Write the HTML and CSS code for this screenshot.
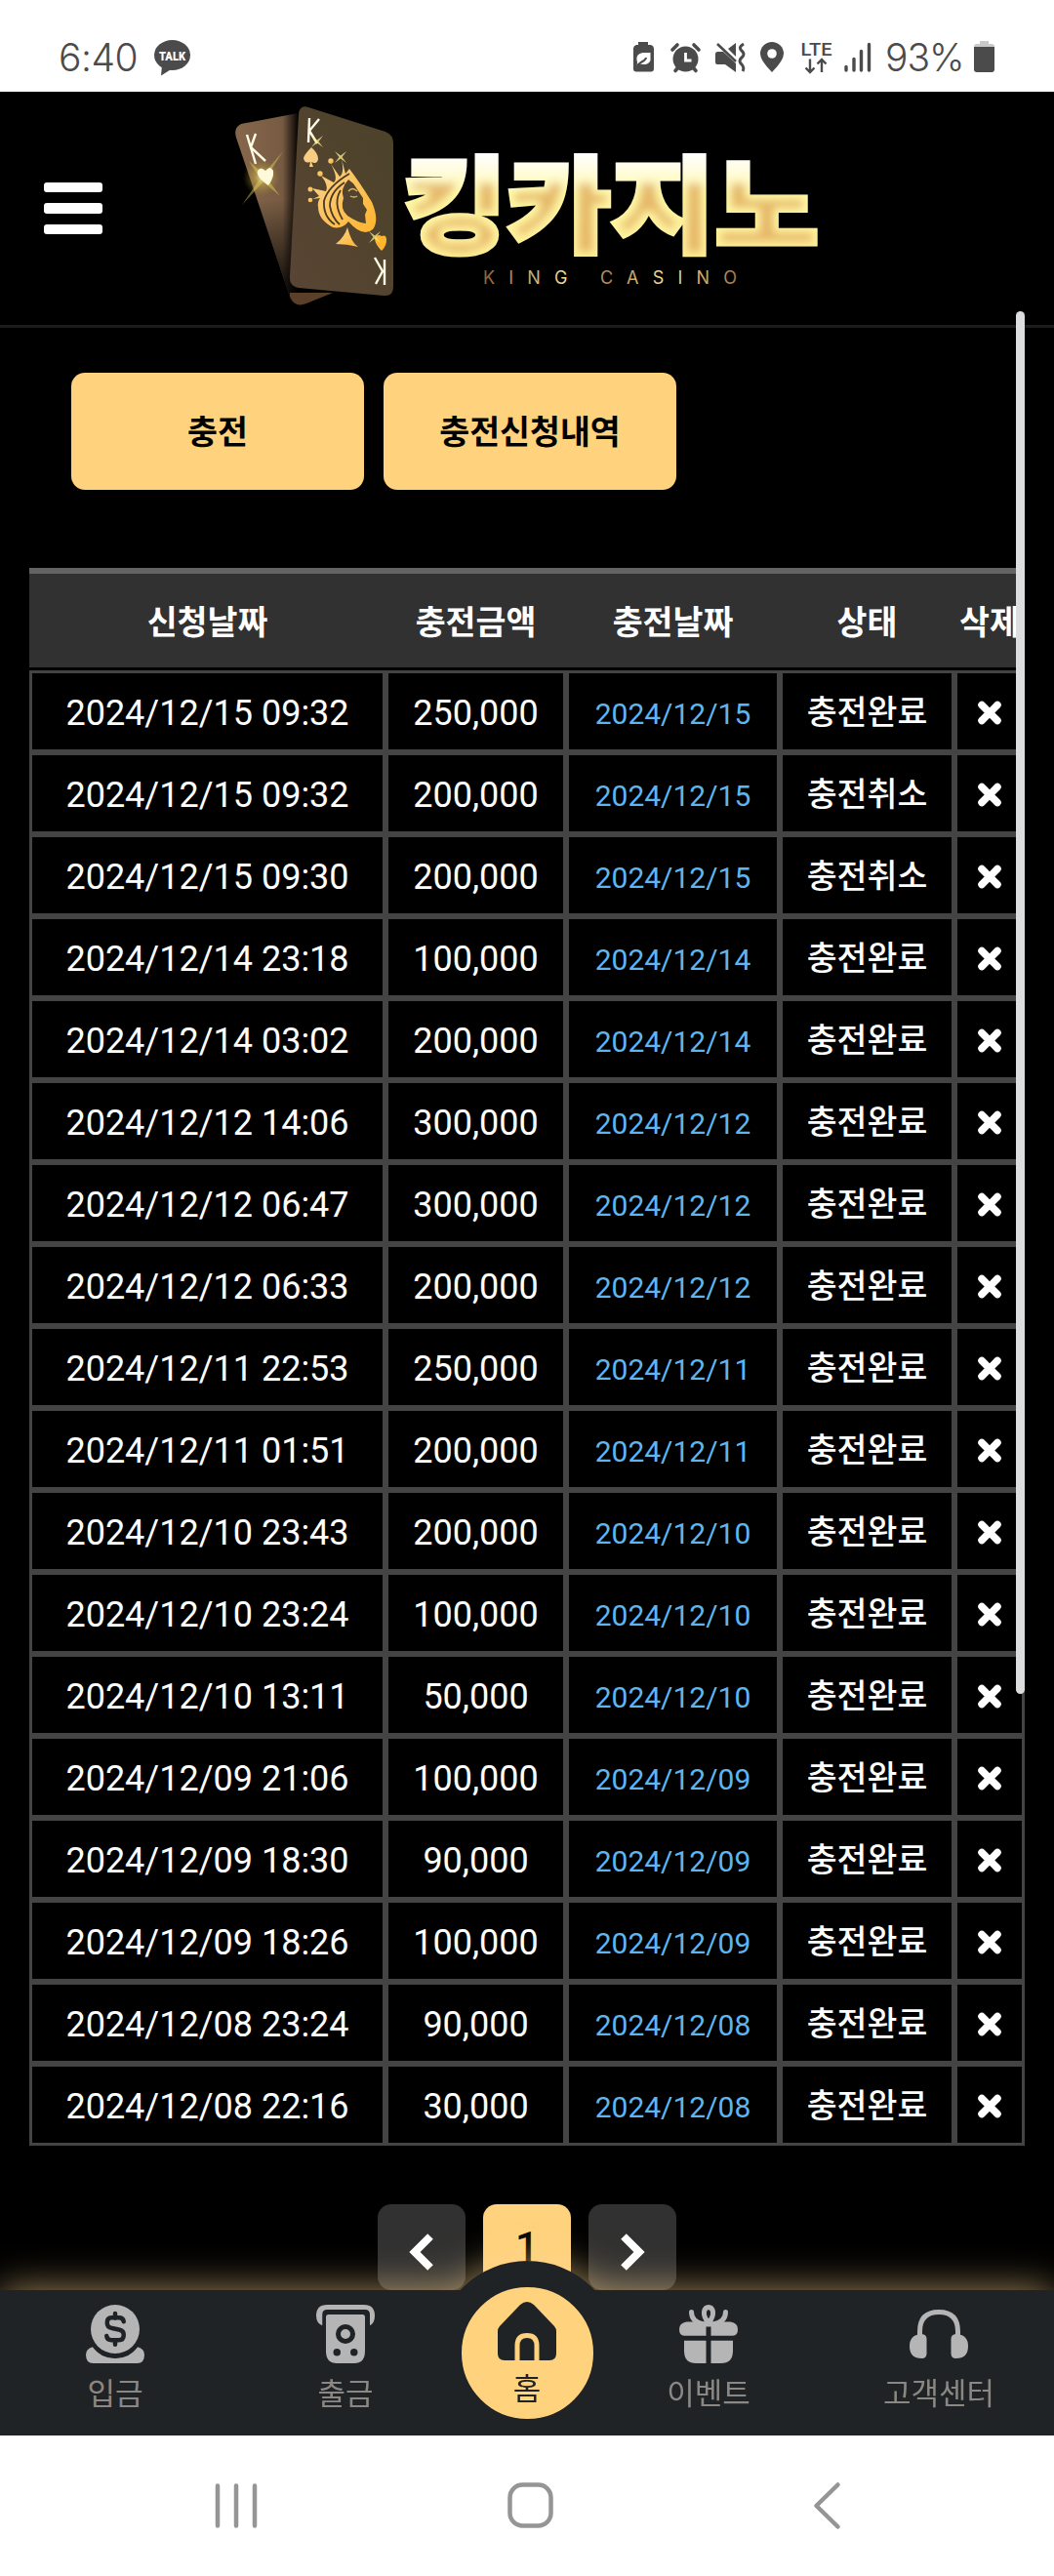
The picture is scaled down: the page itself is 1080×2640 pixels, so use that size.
FILE: index.html
```
<!DOCTYPE html>
<html lang="ko">
<head>
<meta charset="UTF-8">
<meta name="viewport" content="width=device-width, initial-scale=1.0">
<title>충전신청내역</title>
<link rel="stylesheet" href="styles.css">
</head>
<body>
<header class="status-bar">
	<div class="status-left">
		<span class="status-time">6:40</span>
		<svg class="talk" width="37" height="37" viewBox="0 0 37 37">
			<ellipse cx="18.500" cy="15.500" rx="18.500" ry="15.500" fill="#4b4b4b"/>
			<path d="M8 26 L7 36.500 L19 29 Z" fill="#4b4b4b"/>
			<text x="18.500" y="20.500" class="talk-text" textLength="27" lengthAdjust="spacingAndGlyphs">TALK</text>
		</svg>
	</div>
	<svg class="status-icons" width="250" height="36" viewBox="0 0 250 36" fill="#4b4b4b">
		<!-- 배터리 절약 -->
		<path d="M6 1 h10 v3 h3 a4 4 0 0 1 3 3.500 v21 a3 3 0 0 1 -3 3 h-15 a3 3 0 0 1 -3 -3 v-21 a4 4 0 0 1 3 -3.500 h2z"/>
		<path d="M18.500 12 v8 q-2 4 -6 4 q-4 0 -6 -1 l-2 2 q1 -4 0 -5 q-1 -7 6 -8z" fill="#fff"/>
		<path d="M5 25 Q8 22 12 20 Q14 18 14 17" fill="none" stroke="#4b4b4b" stroke-width="2"/>
		<!-- 알람 -->
		<circle cx="54.500" cy="18.500" r="13"/>
		<path d="M41 9 L46 4 M68 9 L63 4 M44 30.500 L47 27 M65 30.500 L62 27" stroke="#4b4b4b" stroke-width="3.600" stroke-linecap="round"/>
		<path d="M54.500 12 v8 h6" fill="none" stroke="#fff" stroke-width="2.800"/>
		<!-- 무음 -->
		<path d="M85 13 q0 -1.500 2 -2 h6 l13 12 v9 l-11 -8 h-8 q-2 0 -2 -2z M98 8 l8 -6 v14z"/>
		<path d="M87 3 L106 21" stroke="#4b4b4b" stroke-width="2.600"/>
		<path d="M114 3 q-6 3.500 -2 7 q4 3.500 0 7 q-4 3.500 0 7 q3 3 1 7" fill="none" stroke="#4b4b4b" stroke-width="3"/>
		<!-- 위치 -->
		<path d="M143 1 a12 12 0 0 1 12 12 q0 7 -12 19 q-12 -12 -12 -19 a12 12 0 0 1 12 -12z"/>
		<circle cx="143" cy="13" r="4.800" fill="#fff"/>
		<text x="172.500" y="14.500" class="lte" textLength="32" lengthAdjust="spacingAndGlyphs">LTE</text>
		<path d="M182 18.500 v13 M177.500 27.500 l4.500 4.500 l4.500 -4.500 M194 32 v-13 M189.500 23.500 l4.500 -4.500 l4.500 4.500" fill="none" stroke="#4b4b4b" stroke-width="2.400"/>
		<!-- 신호 -->
		<path d="M219 26.500 v3.500 M227 18.500 v11.500 M234.500 10.500 v19.500 M242.500 3.500 v26.500" stroke="#4b4b4b" stroke-width="3.400" stroke-linecap="round"/>
	</svg>
	<span class="status-percent">93%</span>
	<svg class="battery" width="21" height="32" viewBox="0 0 21 32">
		<path d="M6 0 h9 v3 h3 q3 0 3 3 v1 h-21 v-1 q0 -3 3 -3 h3z" fill="#c9c9c9"/>
		<path d="M0 6 h21 v23 q0 3 -3 3 h-15 q-3 0 -3 -3z" fill="#4b4b4b"/>
	</svg>
</header>

<div class="top-bar">
	<button class="menu-btn" type="button" aria-label="메뉴"><span></span><span></span><span></span></button>
	<svg class="logo" width="610" height="220" viewBox="230 100 610 220">
		<defs>
			<linearGradient id="cardBack" x1="0" x2="1">
				<stop offset="0" stop-color="#86674c"/>
				<stop offset=".5" stop-color="#765b42"/>
				<stop offset=".66" stop-color="#080503"/>
			</linearGradient>
			<linearGradient id="cardShade" x1="0" y1="0" x2="0" y2="1">
				<stop offset=".45" stop-color="#000" stop-opacity="0"/>
				<stop offset=".9" stop-color="#000" stop-opacity=".8"/>
			</linearGradient>
			<linearGradient id="cardFront" x1="0" y1="1" x2="1" y2="0">
				<stop offset="0" stop-color="#594534"/>
				<stop offset="1" stop-color="#4b4229"/>
			</linearGradient>
			<linearGradient id="gold" x1="0" y1="0" x2="1" y2="1">
				<stop offset="0" stop-color="#f9d391"/>
				<stop offset="1" stop-color="#ffb42b"/>
			</linearGradient>
			<linearGradient id="title" gradientUnits="userSpaceOnUse" x1="0" y1="158" x2="0" y2="264">
				<stop offset="0" stop-color="#fff"/>
				<stop offset=".15" stop-color="#fffce0"/>
				<stop offset=".4" stop-color="#fff9a6"/>
				<stop offset="1" stop-color="#ffee98"/>
			</linearGradient>
			<!-- 글자 안쪽의 어두운 금색 음영 -->
			<filter id="bevel" filterUnits="userSpaceOnUse" x="400" y="140" width="450" height="140">
				<feMorphology in="SourceAlpha" operator="erode" radius="5" result="core"/>
				<feFlood x="400" y="188" width="450" height="80" flood-color="#dc9c4a" flood-opacity=".75" result="tone"/>
				<feComposite in="tone" in2="core" operator="in"/>
				<feGaussianBlur stdDeviation="4" result="soft"/>
				<feComposite in="soft" in2="SourceAlpha" operator="in" result="inner"/>
				<feMerge><feMergeNode in="SourceGraphic"/><feMergeNode in="inner"/></feMerge>
			</filter>
			<linearGradient id="sub" x1="0" x2="1">
				<stop offset="0" stop-color="#8a6236"/>
				<stop offset=".33" stop-color="#f3df9a"/>
				<stop offset=".5" stop-color="#b08250"/>
				<stop offset=".72" stop-color="#f6e49a"/>
				<stop offset="1" stop-color="#a9783f"/>
			</linearGradient>
			<radialGradient id="flare">
				<stop offset="0" stop-color="#fffbd0"/>
				<stop offset=".35" stop-color="#d6bd45" stop-opacity=".6"/>
				<stop offset="1" stop-color="#b09a30" stop-opacity="0"/>
			</radialGradient>
			<path id="star" d="M-6 -6 L0 -1.500 L6 -6 L1.500 0 L6 6 L0 1.500 L-6 6 L-1.500 0Z"/>
		</defs>
		<path d="M247 127 L305 116 L338 299 L314 311 Q302 316 297 304 L242 141 Q239 131 247 127Z" fill="url(#cardBack)"/>
		<path d="M247 127 L305 116 L338 299 L314 311 Q302 316 297 304 L242 141 Q239 131 247 127Z" fill="url(#cardShade)"/>
		<path d="M297 300 L341 300 L314 311 Q302 316 297 304Z" fill="#5a4029"/>
		<path d="M316 110 L395 135 Q403 138 403 147 V294 Q403 304 393 303 L306 295 Q296 293 297 283 L306 117 Q307 107 316 110Z" fill="url(#cardFront)"/>
		<g fill="none" stroke="#fffbe5" stroke-width="2.400">
			<path d="M253 138 L262 168 M262 137 L257 151 L272 165"/>
			<path d="M317 121 L316 146 M327 122 L317 134 L325 147"/>
			<path d="M394 266 V292 M384 264 L392 278 L385 291"/>
		</g>
		<circle cx="268" cy="182" r="19" fill="url(#flare)" opacity=".8"/>
		<path d="M248 210 L267 182 L290 155 L271 185Z M255 165 L271 179 L287 201 L267 184Z" fill="#e9d45c" opacity=".45"/>
		<path d="M275 190 Q262 181 264 175 Q267 170 272 175 Q277 169 280 175 Q281 182 275 190Z" fill="#fff9dc"/>
		<path d="M319 151 Q326 157 326 163 Q325 169 319 166 L321 171 H317 L318 166 Q312 168 311 162 Q312 158 319 151Z" fill="#f7cd83"/>
		<path d="M391 257 Q384 250 384 244 Q387 239 391 242 V238 V242 Q396 240 396 246 Q396 252 391 257Z" fill="#ffb62d"/>
		<g fill="url(#gold)">
			<path fill-rule="evenodd" d="M358 173 Q368 186 381 207 Q389 226 382 235 Q372 244 357 227 Q351 235 341 233 Q326 225 326 212 Q325 207 328 203 L320 204 L327 201 L320 193 L334 196 Q337 190 329 180 L342 187 Q347 183 339 168 L348 181 Q353 178 350 163 L354 178 Z M357 184 Q348 194 352 203 Q348 214 356 221 Q366 228 375 229 L374 220 L376 215 L372 209 L372 203 L362 188Z"/>
			<path d="M356 233 Q360 249 367 253 Q355 250 344 250 Q353 243 356 233Z"/>
			<circle cx="318" cy="205" r="2.300"/><circle cx="318" cy="194" r="2.500"/><circle cx="328" cy="178" r="2.700"/><circle cx="339" cy="165" r="2.700"/>
		</g>
		<path d="M358 178 Q336 191 332 206 Q331 222 343 230 M353 187 Q338 197 338 211 Q340 223 348 230 M349 195 Q341 208 351 225" fill="none" stroke="#4b3926" stroke-width="1.800"/>
		<path d="M357 196 q4 -5 9 0 M359 201 q4 2 7 0" fill="none" stroke="#f0b65a" stroke-width="1.300"/>
		<g fill="#f5e98a" opacity=".8">
			<use href="#star" x="325" y="145"/><use href="#star" x="349" y="161"/><use href="#star" x="384" y="243"/>
		</g>
		<text class="logo-title" x="413" y="250" textLength="426" lengthAdjust="spacingAndGlyphs">킹카지노</text>
		<text class="logo-sub" x="495" y="290.500" textLength="260">KING CASINO</text>
	</svg>
</div>

<main class="content">
	<div class="tabs">
		<a class="tab">충전</a>
		<a class="tab">충전신청내역</a>
	</div>

	<table class="history">
		<colgroup><col class="c-date"><col class="c-amount"><col class="c-done"><col class="c-state"><col class="c-del"></colgroup>
		<thead>
			<tr><th>신청날짜</th><th>충전금액</th><th>충전날짜</th><th>상태</th><th>삭제</th></tr>
		</thead>
		<tbody id="rows"></tbody>
	</table>

	<div class="paging">
		<a class="page"><svg width="26" height="40" viewBox="0 0 26 40"><path d="M22 4 L6 20 L22 36" /></svg></a>
		<a class="page on">1</a>
		<a class="page"><svg width="26" height="40" viewBox="0 0 26 40"><path d="M4 4 L20 20 L4 36" /></svg></a>
	</div>
</main>

<nav class="bottom-nav">
	<a class="nav-item">
		<svg width="60" height="60" viewBox="0 0 24 24" fill="#b5b5b5">
			<path d="M2.800 17.300 Q6 22 12 22 Q18 22 21.200 17.300 Q24 18 24 20.500 Q24 24 21 24 H3 Q0 24 0 20.500 Q0 18 2.800 17.300Z"/>
			<circle cx="12" cy="10" r="11.800" fill="#1f2326"/>
			<circle cx="12" cy="10" r="10"/>
			<path d="M15.500 6.900 Q15.300 5.300 13.500 5.300 H10.500 Q8.700 5.300 8.700 7.400 Q8.700 9.300 10.700 9.600 L13.500 10.200 Q15.500 10.600 15.500 12.300 Q15.500 14.500 13.500 14.500 H10.500 Q8.700 14.500 8.500 12.800 M12 3.600 V5.500 M12 14.500 V16.300" fill="none" stroke="#1f2326" stroke-width="1.800" stroke-linecap="round"/>
		</svg>
		<span>입금</span>
	</a>
	<a class="nav-item">
		<svg width="60" height="60" viewBox="0 0 24 24" fill="#b5b5b5">
			<path d="M2.500 8.500 Q0 7.500 0 4.500 Q0 0 4.500 0 H19.500 Q24 0 24 4.500 Q24 7.500 22 8.500 V4 Q22 2 20 2 H4.500 Q2.500 2 2.500 4Z"/>
			<path d="M4 5 Q4 4 5 4 H19 Q20 4 20 5 V19 Q20 24 15.500 24 H8.500 Q4 24 4 19Z"/>
			<circle cx="12" cy="12" r="3" fill="none" stroke="#1f2326" stroke-width="2"/>
			<circle cx="8.500" cy="19.500" r="1.500" fill="#1f2326"/><circle cx="15.500" cy="19.500" r="1.500" fill="#1f2326"/>
		</svg>
		<span>출금</span>
	</a>
	<a class="nav-item home">
		<span class="home-circle">
			<svg width="60" height="60" viewBox="0 0 60 60">
				<path d="M23 3 Q30 -3 37 3 L58 25 Q60 27.500 60 30 V53 Q60 60 53 60 H7 Q0 60 0 53 V30 Q0 27.500 2 25Z" fill="#1f2326"/>
				<path d="M20 60 V45 Q20 34.500 30 34.500 Q40 34.500 40 45 V60" fill="none" stroke="#ffd27d" stroke-width="5"/>
			</svg>
			<span>홈</span>
		</span>
	</a>
	<a class="nav-item">
		<svg width="60" height="60" viewBox="0 0 24 24" fill="#b5b5b5">
			<path d="M3 7 H21 Q24 7.500 24 10 Q24 12.700 22 12.700 H2 Q0 12.700 0 10 Q0 7.500 3 7Z"/>
			<path d="M2 14.700 H22 V19 Q22 24 17 24 H7 Q2 24 2 19Z"/>
			<path d="M5 3 Q5 7 10 8 M19 3 Q19 7 14 8 M12 7.500 Q9.900 5 10.200 2.800 Q10.600 1 12 1 Q13.400 1 13.800 2.800 Q14.100 5 12 7.500" fill="none" stroke="#b5b5b5" stroke-width="2" stroke-linecap="round"/>
			<path d="M11 9 H13 V24 H11Z" fill="#1f2326"/>
		</svg>
		<span>이벤트</span>
	</a>
	<a class="nav-item">
		<svg width="60" height="60" viewBox="0 0 24 24" fill="#b5b5b5">
			<path d="M4.200 13 V11 Q4.200 3 12 3 Q19.800 3 19.800 11 V13" fill="none" stroke="#b5b5b5" stroke-width="2"/>
			<path d="M4.500 12 Q7 12 7 14 V20 Q7 22 5 22 Q0 22 0 17 Q0 12.500 4.500 12Z M19.500 12 Q17 12 17 14 V20 Q17 22 19 22 Q24 22 24 17 Q24 12.500 19.500 12Z"/>
		</svg>
		<span>고객센터</span>
	</a>
</nav>

<footer class="system-nav">
	<svg width="1080" height="144" viewBox="0 0 1080 144" fill="none" stroke="#959595" stroke-width="4.500" stroke-linecap="round" stroke-linejoin="round">
		<path d="M223 51.500 V92.500 M242 51.500 V92.500 M261 51.500 V92.500"/>
		<rect x="522.500" y="50.500" width="42" height="42" rx="13"/>
		<path d="M858.500 50.500 L836.500 72 L858.500 93.500"/>
	</svg>
</footer>
<div class="scroll-thumb"></div>

<script>
	// 신청날짜, 금액, 상태
	const list = [
		['2024/12/15 09:32', '250,000', '충전완료'],
		['2024/12/15 09:32', '200,000', '충전취소'],
		['2024/12/15 09:30', '200,000', '충전취소'],
		['2024/12/14 23:18', '100,000', '충전완료'],
		['2024/12/14 03:02', '200,000', '충전완료'],
		['2024/12/12 14:06', '300,000', '충전완료'],
		['2024/12/12 06:47', '300,000', '충전완료'],
		['2024/12/12 06:33', '200,000', '충전완료'],
		['2024/12/11 22:53', '250,000', '충전완료'],
		['2024/12/11 01:51', '200,000', '충전완료'],
		['2024/12/10 23:43', '200,000', '충전완료'],
		['2024/12/10 23:24', '100,000', '충전완료'],
		['2024/12/10 13:11', '50,000', '충전완료'],
		['2024/12/09 21:06', '100,000', '충전완료'],
		['2024/12/09 18:30', '90,000', '충전완료'],
		['2024/12/09 18:26', '100,000', '충전완료'],
		['2024/12/08 23:24', '90,000', '충전완료'],
		['2024/12/08 22:16', '30,000', '충전완료']
	];
	const icon = '<svg width="24" height="25" viewBox="0 0 24 25"><path d="M4 4.500 L20 20.500 M20 4.500 L4 20.500"/></svg>';
	document.getElementById('rows').innerHTML = list.map(([date, amount, state]) => `
		<tr>
			<td>${date}</td>
			<td>${amount}</td>
			<td class="done">${date.slice(0, 10)}</td>
			<td class="state">${state}</td>
			<td class="del">${icon}</td>
		</tr>`).join('');
</script>
</body>
</html>
```
FILE: styles.css
```
* {
	box-sizing: border-box;
}
body {
	margin: 0;
	width: 1080px;
	height: 2640px;
	overflow: hidden;
	display: flex;
	flex-direction: column;
	background: #000;
	color: #fff;
	font-family: Roboto, "Noto Sans CJK KR", sans-serif;
}
svg {
	display: block;
	flex: none;
	overflow: visible;
}

/* 상태 표시줄 */
.status-bar {
	display: flex;
	height: 94px;
	padding: 0 61px 0 60px;
	background: #fff;
	color: #4b4b4b;
	font-family: Inter, sans-serif;
	font-size: 39px;
	font-weight: 300;
}
.status-left {
	display: flex;
	flex: 1;
}
.status-time, .status-percent {
	line-height: 47px;
	margin-top: 35px;
	letter-spacing: -.5px;
}
.status-time {
	width: 98px;
}
.status-percent {
	width: 91px;
	letter-spacing: -1px;
}
.talk {
	margin-top: 41px;
}
.talk-text {
	font: 900 12px Roboto, sans-serif;
	fill: #fff;
	text-anchor: middle;
}
.status-icons {
	margin: 42px 9.500px 0 0;
}
.lte {
	font: 500 19px Roboto, sans-serif;
}
.battery {
	margin-top: 42px;
}

/* 상단 로고 */
.top-bar {
	display: flex;
	height: 243px;
	padding-left: 45px;
	border-bottom: 3px solid #1c1c1c;
}
.menu-btn {
	display: flex;
	flex-direction: column;
	gap: 11px;
	width: 60px;
	margin-top: 93px;
	padding: 0;
	border: 0;
	background: none;
}
.menu-btn span {
	width: 60px;
	height: 10.500px;
	border-radius: 3px;
	background: #fff;
}
.logo {
	margin: 6px 0 0 125px;
}
.logo-title {
	font: 900 107px "Noto Sans CJK KR", sans-serif;
	fill: url(#title);
	stroke: url(#title);
	stroke-width: 5px;
	filter: url(#bevel);
}
.logo-sub {
	font: 400 18px Inter, sans-serif;
	fill: url(#sub);
}

/* 본문 */
.content {
	flex: 1;
	padding: 46px 30px 0;
}
.tabs {
	display: flex;
	gap: 20px;
	padding-left: 43px;
}
.tab {
	width: 300px;
	height: 120px;
	border-radius: 14px;
	background: #ffd27d;
	color: #000;
	font-size: 33.600px;
	font-weight: 700;
	line-height: 123px;
	text-align: center;
}
.history {
	width: 1020px;
	margin-top: 80px;
	table-layout: fixed;
	border-collapse: separate;
	border-spacing: 0;
}
.c-date { width: 365px; }
.c-amount { width: 185px; }
.c-done { width: 219px; }
.c-state { width: 179px; }
.c-del { width: 72px; }
th {
	height: 105px;
	padding: 0 0 2px;
	border-top: 6px solid #636363;
	border-bottom: 3px solid #000;
	background: #313131;
	font-size: 33.600px;
	font-weight: 700;
	white-space: nowrap;
}
td {
	height: 84px;
	padding: 3px 0 0;
	border: 3px solid #444;
	font-size: 36px;
	line-height: 42px;
	text-align: center;
	white-space: nowrap;
}
.done {
	padding-top: 6px;
	color: #5eb5f0;
	font-size: 30px;
}
.state {
	font-size: 33.600px;
	font-weight: 500;
}
.del svg {
	margin: 0 auto;
}
.del path {
	stroke: #fff;
	stroke-width: 7.500px;
	stroke-linecap: round;
}
.paging {
	display: flex;
	justify-content: center;
	gap: 18px;
	margin-top: 60px;
}
.page {
	display: flex;
	align-items: center;
	justify-content: center;
	width: 90px;
	height: 88px;
	border-radius: 14px;
	background: #313131;
	font-size: 42px;
	font-weight: 500;
	line-height: 88px;
}
.page.on {
	background: #ffd27d;
	color: #000;
}
.page svg {
	margin-top: 9px;
}
.page path {
	fill: none;
	stroke: #fff;
	stroke-width: 8px;
}

/* 하단 메뉴 */
.bottom-nav {
	display: flex;
	justify-content: space-between;
	flex: none;
	height: 149px;
	background: #1f2326;
	filter: drop-shadow(0 0 20px rgba(255, 215, 145, .65));
}
.nav-item {
	display: flex;
	flex-direction: column;
	align-items: center;
	gap: 9px;
	width: 236px;
	padding-top: 15px;
	color: #8b8783;
	font-size: 31px;
	line-height: 46px;
}
.home {
	width: 136px;
	padding: 0;
}
.home-circle {
	flex: none;
	display: flex;
	flex-direction: column;
	align-items: center;
	gap: 7px;
	width: 189px;
	height: 189px;
	margin-top: -30px;
	padding-top: 15px;
	border: 27px solid #1f2326;
	border-radius: 50%;
	background: #ffd27d;
	color: #1f2326;
}
.system-nav {
	position: relative;
	flex: none;
	height: 144px;
	background: #fff;
}

/* 스크롤 표시 */
.scroll-thumb {
	position: absolute;
	top: 319px;
	left: 1041px;
	width: 9px;
	height: 1417px;
	border-radius: 5px;
	background: #dcdddf;
}
```
